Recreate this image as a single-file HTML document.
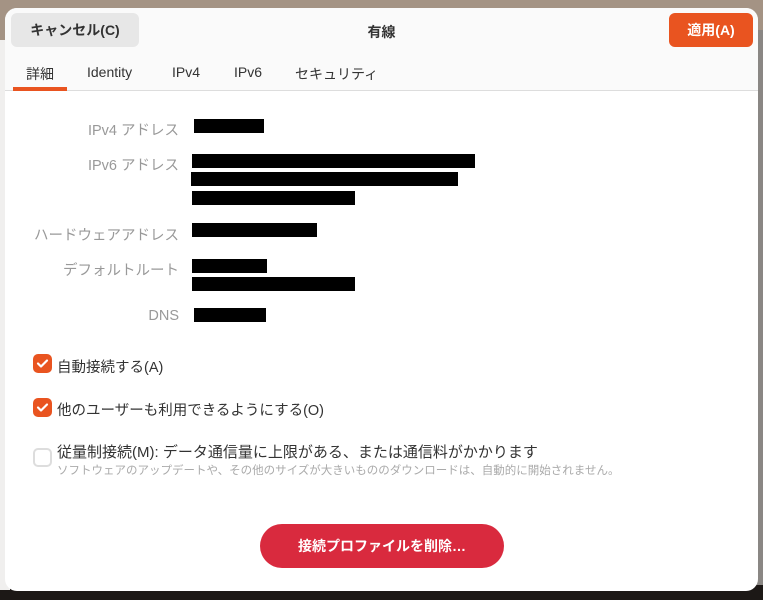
<!DOCTYPE html>
<html><head><meta charset="utf-8"><style>
*{margin:0;padding:0;box-sizing:border-box}
body{width:763px;height:600px;overflow:hidden;position:relative;background:#e8e6e4;font-family:"Liberation Sans","Noto Sans CJK JP",sans-serif}
.bgtop{position:absolute;left:0;top:0;width:763px;height:40px;background:#a49384}
.bgright{position:absolute;left:755px;top:30px;width:8px;height:570px;background:#8a8784}
.bgbot{position:absolute;left:0;top:585px;width:763px;height:15px;background:#1c1816}
.bgleft{position:absolute;left:0;top:40px;width:10px;height:550px;background:#f0efee}
.dlg{position:absolute;left:5px;top:8px;width:753px;height:583px;background:#fff;border-radius:12px;overflow:hidden}
.hdr{position:absolute;left:0;top:0;width:753px;height:83px;background:#fafafa;border-bottom:1px solid #ddd}
.btn{position:absolute;font-size:14px;font-weight:bold;border-radius:6px;text-align:center;line-height:34px;height:34px}
.cancel{left:6px;top:5px;width:128px;background:#e7e7e7;color:#333}
.apply{left:664px;top:5px;width:84px;background:#e95420;color:#fff}
.title{position:absolute;left:0;width:753px;top:14px;text-align:center;font-size:14px;font-weight:bold;color:#333}
.tab{position:absolute;top:56px;font-size:14px;color:#333}
.ul{position:absolute;left:8px;top:79px;width:54px;height:4px;background:#e95420}
.lbl{position:absolute;width:174px;text-align:right;font-size:14.5px;color:#999}
.red{position:absolute;background:#000}
.cb{position:absolute;left:28px;width:19px;height:19px;border-radius:5px;background:#e95420}
.cb svg{position:absolute;left:2px;top:2px}
.cbe{background:#fff;border:2px solid #ddd}
.t{position:absolute;left:52px;font-size:14.5px;color:#333;white-space:nowrap}
.del{position:absolute;left:255px;top:516px;width:244px;height:44px;border-radius:22px;background:#d92a3e;color:#fff;font-size:14px;font-weight:bold;text-align:center;line-height:44px}
</style></head><body>
<div class="bgtop"></div><div class="bgright"></div><div class="bgbot"></div><div class="bgleft"></div>
<div class="dlg">
<div class="hdr">
<div class="btn cancel">キャンセル(C)</div>
<div class="title">有線</div>
<div class="btn apply">適用(A)</div>
<div class="tab" style="left:21px">詳細</div>
<div class="tab" style="left:82px">Identity</div>
<div class="tab" style="left:167px">IPv4</div>
<div class="tab" style="left:229px">IPv6</div>
<div class="tab" style="left:290px">セキュリティ</div>
<div class="ul"></div>
</div>
<div class="lbl" style="top:111px">IPv4 アドレス</div>
<div class="lbl" style="top:146px">IPv6 アドレス</div>
<div class="lbl" style="top:216px">ハードウェアアドレス</div>
<div class="lbl" style="top:251px">デフォルトルート</div>
<div class="lbl" style="top:300px">DNS</div>
<div class="red" style="left:189px;top:111px;width:70px;height:14px"></div>
<div class="red" style="left:187px;top:146px;width:283px;height:14px"></div>
<div class="red" style="left:186px;top:164px;width:267px;height:14px"></div>
<div class="red" style="left:187px;top:183px;width:163px;height:14px"></div>
<div class="red" style="left:187px;top:215px;width:125px;height:14px"></div>
<div class="red" style="left:187px;top:251px;width:75px;height:14px"></div>
<div class="red" style="left:187px;top:269px;width:163px;height:14px"></div>
<div class="red" style="left:189px;top:300px;width:72px;height:14px"></div>
<div class="cb" style="top:346px"><svg width="15" height="15" viewBox="0 0 15 15"><path d="M3 7.5l3 3 6-6" stroke="#fff" stroke-width="2.2" fill="none" stroke-linecap="round" stroke-linejoin="round"/></svg></div>
<div class="t" style="top:348px">自動接続する(A)</div>
<div class="cb" style="top:390px"><svg width="15" height="15" viewBox="0 0 15 15"><path d="M3 7.5l3 3 6-6" stroke="#fff" stroke-width="2.2" fill="none" stroke-linecap="round" stroke-linejoin="round"/></svg></div>
<div class="t" style="top:391px">他のユーザーも利用できるようにする(O)</div>
<div class="cb cbe" style="top:440px"></div>
<div class="t" style="top:433px;font-size:15px">従量制接続(M): データ通信量に上限がある、または通信料がかかります</div>
<div class="t" style="top:454px;font-size:11.5px;color:#aaa">ソフトウェアのアップデートや、その他のサイズが大きいもののダウンロードは、自動的に開始されません。</div>
<div class="del">接続プロファイルを削除…</div>
</div>
</body></html>
